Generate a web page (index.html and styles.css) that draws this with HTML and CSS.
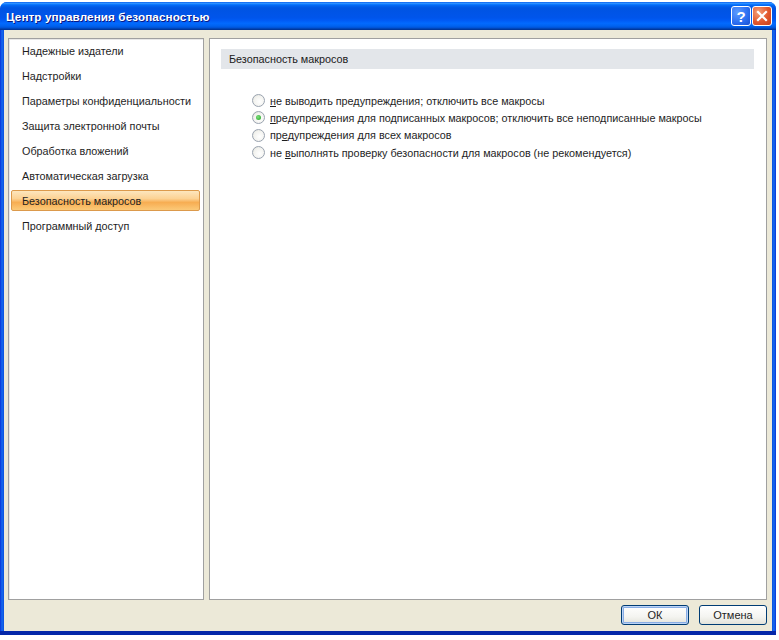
FILE: index.html
```html
<!DOCTYPE html>
<html lang="ru">
<head>
<meta charset="utf-8">
<title>Центр управления безопасностью</title>
<link rel="stylesheet" href="styles.css">
</head>
<body>
<div class="window">
  <div class="titlebar">
    <span class="title">Центр управления безопасностью</span>
    <div class="tb-buttons">
      <span class="tb-btn help">?</span>
      <span class="tb-btn close">
        <svg width="12" height="12" viewBox="0 0 12 12"><path d="M2 2 L10 10 M10 2 L2 10" stroke="#fff" stroke-width="2.2" stroke-linecap="square"/></svg>
      </span>
    </div>
  </div>
  <div class="client">
    <div class="panels">
      <ul class="nav">
        <li class="nav-item">Надежные издатели</li>
        <li class="nav-item">Надстройки</li>
        <li class="nav-item">Параметры конфиденциальности</li>
        <li class="nav-item">Защита электронной почты</li>
        <li class="nav-item">Обработка вложений</li>
        <li class="nav-item">Автоматическая загрузка</li>
        <li class="nav-item selected">Безопасность макросов</li>
        <li class="nav-item">Программный доступ</li>
      </ul>
      <div class="content">
        <div class="section-head">Безопасность макросов</div>
        <div class="options">
          <div class="opt"><span class="radio"></span><span><u>н</u>е выводить предупреждения; отключить все макросы</span></div>
          <div class="opt"><span class="radio checked"></span><span><u>п</u>редупреждения для подписанных макросов; отключить все неподписанные макросы</span></div>
          <div class="opt"><span class="radio"></span><span>пр<u>е</u>дупреждения для всех макросов</span></div>
          <div class="opt"><span class="radio"></span><span>не <u>в</u>ыполнять проверку безопасности для макросов (не рекомендуется)</span></div>
        </div>
      </div>
    </div>
    <div class="footer">
      <button class="btn default">ОК</button>
      <button class="btn">Отмена</button>
    </div>
  </div>
</div>
</body>
</html>
```

FILE: styles.css
```css
html, body {
  margin: 0;
  padding: 0;
  background: #ffffff;
}
body {
  font-family: "Liberation Sans", Arial, sans-serif;
  font-size: 10.8px;
  color: #1e1e1e;
}
.window {
  margin-top: 2px;
  width: 776px;
  height: 633px;
  box-sizing: border-box;
  border-radius: 7px 7px 0 0;
  background: linear-gradient(to right, #0831d9 0, #166aee 2px, #0a4fe0 4px, #0a4fe0 772px, #166aee 774px, #0831d9 776px);
  padding: 0 4px 4px 4px;
  display: flex;
  flex-direction: column;
  box-shadow: inset 0 -4px 0 #0427a8;
}
.titlebar {
  height: 28px;
  margin: 0 -4px;
  padding: 0 4px 0 6px;
  border-radius: 7px 7px 0 0;
  display: flex;
  align-items: center;
  justify-content: space-between;
  background: linear-gradient(to bottom, #0058ee 0%, #3593ff 4%, #288eff 6%, #127dff 8%, #036ffc 10%, #0262ee 14%, #0057e5 20%, #0054e3 24%, #0055eb 56%, #005bf5 66%, #026afe 76%, #0062ef 86%, #0052d6 92%, #0040ab 96%, #003092 100%);
}
.title {
  color: #ffffff;
  font-weight: bold;
  font-size: 11.7px;
  text-shadow: 1px 1px 0 #0a1883;
  letter-spacing: 0.1px;
}
.tb-buttons {
  display: flex;
  gap: 1px;
}
.tb-btn {
  width: 20px;
  height: 20px;
  box-sizing: border-box;
  border: 1px solid #ffffff;
  border-radius: 3px;
  display: flex;
  align-items: center;
  justify-content: center;
  color: #ffffff;
  font-weight: bold;
  font-size: 15px;
}
.help {
  background: radial-gradient(circle at 30% 30%, #5c9cff 0%, #2b6df0 60%, #1a4fd0 100%);
}
.close {
  background: radial-gradient(circle at 30% 30%, #f4a07a 0%, #e2582e 55%, #c8401c 100%);
}
.client {
  flex: 1;
  background: #ece9d8;
  padding: 8px 5px 4px 4px;
  display: flex;
  flex-direction: column;
}
.panels {
  flex: 1;
  display: flex;
  gap: 5px;
}
.nav {
  list-style: none;
  margin: 0;
  padding: 1px 0 0 0;
  width: 196px;
  box-sizing: border-box;
  background: #ffffff;
  border: 1px solid #a0a0a0;
  box-shadow: inset 1px 1px 0 #e8e8e8;
}
.nav-item {
  height: 21px;
  line-height: 21px;
  margin: 0 3px 4px 2px;
  padding-left: 10px;
  border: 1px solid transparent;
  border-radius: 2px;
  box-sizing: border-box;
  white-space: nowrap;
}
.nav-item.selected {
  border-color: #dc9a4c;
  background: linear-gradient(to bottom, #fde6be 0%, #fcd294 40%, #f7ad52 60%, #fbc978 100%);
}
.content {
  flex: 1;
  background: #ffffff;
  border: 1px solid #a0a0a0;
  padding: 10px 12px 0 11px;
}
.section-head {
  height: 20px;
  line-height: 20px;
  padding-left: 8px;
  background: #e3e6ea;
  color: #202020;
}
.options {
  margin-top: 23px;
  padding-left: 31px;
  display: flex;
  flex-direction: column;
}
.opt {
  height: 17.3px;
  display: flex;
  align-items: center;
  gap: 5px;
  white-space: nowrap;
}
.radio {
  width: 13px;
  height: 13px;
  box-sizing: border-box;
  border-radius: 50%;
  border: 1px solid #9aa3b0;
  background: radial-gradient(circle at 60% 60%, #ffffff 0%, #f2f2ee 60%, #d8d8d0 100%);
  display: flex;
  align-items: center;
  justify-content: center;
  flex: none;
}
.radio.checked::after {
  content: "";
  width: 5px;
  height: 5px;
  border-radius: 50%;
  background: radial-gradient(circle at 40% 40%, #7fe07f, #21a121);
}
.footer {
  height: 27px;
  display: flex;
  justify-content: flex-end;
  align-items: flex-end;
  gap: 10px;
  padding-bottom: 2px;
  box-sizing: border-box;
}
.btn {
  width: 68px;
  height: 20px;
  box-sizing: border-box;
  font-family: "Liberation Sans", Arial, sans-serif;
  font-size: 11px;
  color: #1e1e1e;
  border: 1px solid #003c74;
  border-radius: 3px;
  background: linear-gradient(to bottom, #ffffff 0%, #f4f4f0 60%, #e3e3db 100%);
  padding: 0;
}
.btn.default {
  box-shadow: inset 0 0 0 1px #bcd4f6, inset 0 0 0 2px #89ade4;
}
```
